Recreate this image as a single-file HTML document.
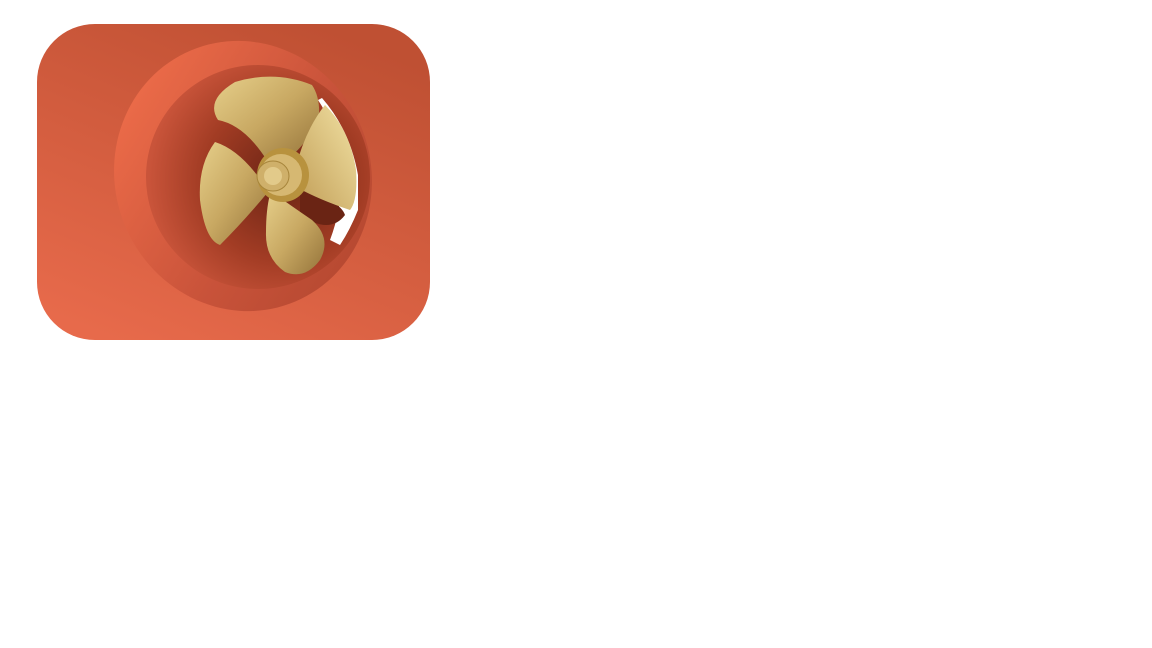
<!DOCTYPE html>
<html><head><meta charset="utf-8"><style>
html,body{margin:0;padding:0;background:#fff;width:1152px;height:648px;overflow:hidden}
svg{position:absolute;left:0;top:0}
</style></head><body>
<svg width="1152" height="648" viewBox="0 0 1152 648">
<defs>
<linearGradient id="bg" x1="0.7" y1="0" x2="0.2" y2="1">
<stop offset="0" stop-color="#bf5033"/><stop offset="1" stop-color="#e76a4b"/></linearGradient>
<linearGradient id="rim" x1="0.2" y1="0.1" x2="0.8" y2="0.9">
<stop offset="0" stop-color="#ea6a48"/><stop offset="0.6" stop-color="#c9533a"/><stop offset="1" stop-color="#b84a32"/></linearGradient>
<radialGradient id="tun" cx="0.6" cy="0.55" r="0.6">
<stop offset="0" stop-color="#6a2414"/><stop offset="0.6" stop-color="#a23c24"/><stop offset="1" stop-color="#c9543a"/></radialGradient>
<linearGradient id="gold" x1="0" y1="0" x2="1" y2="1">
<stop offset="0" stop-color="#e6cf8a"/><stop offset="0.5" stop-color="#c8a862"/><stop offset="1" stop-color="#94733a"/></linearGradient>
<linearGradient id="gold2" x1="1" y1="0" x2="0" y2="1">
<stop offset="0" stop-color="#f2e2a4"/><stop offset="1" stop-color="#c09c55"/></linearGradient>
<clipPath id="hole"><ellipse cx="258" cy="177" rx="112" ry="112" transform="rotate(-20 258 177)"/></clipPath>
</defs>
<rect x="37" y="24" width="393" height="316" rx="58" fill="url(#bg)"/>
<ellipse cx="243" cy="176" rx="128" ry="136" transform="rotate(-20 243 176)" fill="url(#rim)"/>
<ellipse cx="258" cy="177" rx="112" ry="112" transform="rotate(-20 258 177)" fill="url(#tun)"/>
<g clip-path="url(#hole)">
<path d="M322 98 Q350 130 358 175 L358 210 Q350 230 340 245 L330 240 Q345 200 340 160 Q332 120 318 100 Z" fill="#fff"/>
<path d="M300 190 Q340 200 345 215 Q330 235 300 215 Z" fill="#6a2414"/>
<path d="M268 162 Q245 125 218 120 Q205 100 235 82 Q275 70 312 85 Q322 100 318 125 Q300 150 285 162 Z" fill="url(#gold)"/>
<path d="M295 170 Q305 130 325 105 Q350 130 356 170 Q358 200 350 210 Q320 200 298 188 Z" fill="url(#gold2)"/>
<path d="M262 182 Q240 150 215 142 Q198 165 200 200 Q205 240 220 245 Q245 220 268 192 Z" fill="url(#gold)"/>
<path d="M272 192 Q290 205 312 220 Q332 238 320 260 Q305 280 285 272 Q265 258 266 232 Q266 210 270 194 Z" fill="url(#gold)"/>
</g>
<ellipse cx="283" cy="175" rx="26" ry="27" fill="#b8923e"/>
<ellipse cx="281" cy="175" rx="21" ry="21" fill="#d6b872"/>
<ellipse cx="273" cy="176" rx="16" ry="15" fill="#cfb06a" stroke="#a7853b" stroke-width="1"/>
<ellipse cx="273" cy="176" rx="9" ry="9" fill="#e2ca8a"/>
</svg>
</body></html>
